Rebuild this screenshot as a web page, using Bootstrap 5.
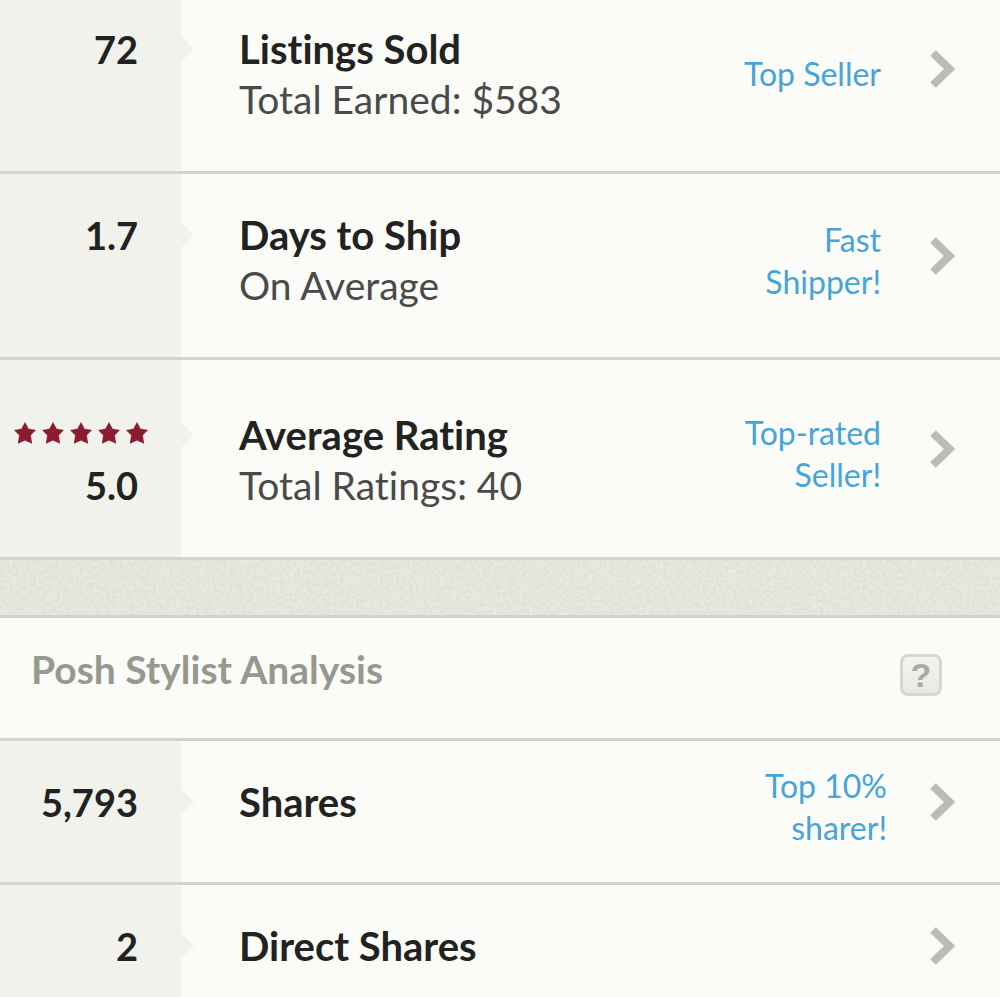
<!DOCTYPE html>
<html lang="en">
<head>
<meta charset="utf-8">
<meta name="viewport" content="width=device-width, initial-scale=1">
<title>Posh Stats</title>
<link href="https://cdn.jsdelivr.net/npm/bootstrap@5.3.0/dist/css/bootstrap.min.css" rel="stylesheet">
<script src="https://cdn.jsdelivr.net/npm/bootstrap@5.3.0/dist/js/bootstrap.bundle.min.js"></script>
<style>
  body { background: #fbfcf8; color: #222; font-family: Lato, "Liberation Sans", sans-serif; font-variant-ligatures: none; overflow-x: hidden; }
  .stat-row { display: grid; grid-template-columns: 181px 1fr auto auto; min-height: 144px; border-bottom: 3px solid #d2d3cc; color: #222; --top: 36px; --lift: 20px; }
  .stat-row.first { min-height: 174px; --top: 24px; --lift: 33px; }
  .stat-row.double { min-height: 186px; }
  .stat-row.rating { min-height: 200px; --top: 50px; }
  .stat-value { background: #f0f2eb; padding: var(--top) 33px 0 0; }
  .stat-value::after { content: ""; position: absolute; left: 100%; top: calc(var(--top) + 12px); border: solid transparent; border-width: 13px 0 13px 13px; border-left-color: #f0f2eb; }
  .num { display: block; padding-right: 10px; font-size: 38px; font-weight: 700; line-height: 50px; }
  .stars { gap: 6px; height: 50px; padding-bottom: 5px; }
  .stat-text { padding: var(--top) 0 0 58px; line-height: 50px; }
  .stat-name { font-size: 40px; font-weight: 700; line-height: 50px; }
  .stat-sub { font-size: 39px; color: #4a4a4a; }
  .stat-tag { color: #45a5d8; font-size: 32px; line-height: 42px; padding-bottom: calc(var(--lift) - 10px); margin-right: 49px; }
  .stat-tag.wide { margin-right: 43px; }
  .chev { box-sizing: content-box; margin-right: 44px; padding-bottom: var(--lift); }
  .band { height: 58px; background: #e2e3da; border-bottom: 3px solid #d2d3cc; }
  .section-head { min-height: 123px; border-bottom: 3px solid #d2d3cc; padding: 26px 58px 0 31px; }
  .section-head h2 { font-size: 39px; font-weight: 700; line-height: 50px; color: #97988e; }
  .help { width: 42px; height: 42px; margin-top: 10px; border: 3px solid #d6d7d2; border-radius: 8px; background: linear-gradient(#f3f3f0, #e8e8e4); color: #a8a9a5; font: 700 34px/36px "Liberation Sans", sans-serif; }
</style>
</head>
<body>
<svg class="d-none" aria-hidden="true">
  <symbol id="chevron" viewBox="0 0 26 38"><path d="M3 3 19.500 19 3 35" fill="none" stroke="#bbbcb8" stroke-width="8"/></symbol>
  <symbol id="star" viewBox="0 0 22 22"><path d="M11 0 14.600 6.800 22 8 16.800 13.300 18.200 21.800 11 18.400 3.800 21.800 5.200 13.300 0 8 7.400 6.800Z" fill="#8e1c30"/></symbol>
</svg>
<main>
  <a href="#sold" class="stat-row first text-decoration-none">
    <div class="stat-value position-relative text-end"><span class="num">72</span></div>
    <div class="stat-text"><h3 class="stat-name m-0">Listings Sold</h3><p class="stat-sub m-0">Total Earned: $583</p></div>
    <div class="stat-tag align-self-center text-end">Top Seller</div>
    <svg class="chev align-self-center" width="26" height="38" aria-hidden="true"><use href="#chevron"/></svg>
  </a>
  <a href="#ship" class="stat-row double text-decoration-none">
    <div class="stat-value position-relative text-end"><span class="num">1.7</span></div>
    <div class="stat-text"><h3 class="stat-name m-0">Days to Ship</h3><p class="stat-sub m-0">On Average</p></div>
    <div class="stat-tag align-self-center text-end">Fast<br>Shipper!</div>
    <svg class="chev align-self-center" width="26" height="38" aria-hidden="true"><use href="#chevron"/></svg>
  </a>
  <a href="#rating" class="stat-row rating text-decoration-none">
    <div class="stat-value position-relative text-end">
      <div class="stars d-flex justify-content-end align-items-center" role="img" aria-label="5 stars">
        <svg width="22" height="22"><use href="#star"/></svg><svg width="22" height="22"><use href="#star"/></svg><svg width="22" height="22"><use href="#star"/></svg><svg width="22" height="22"><use href="#star"/></svg><svg width="22" height="22"><use href="#star"/></svg>
      </div>
      <span class="num">5.0</span>
    </div>
    <div class="stat-text"><h3 class="stat-name m-0">Average Rating</h3><p class="stat-sub m-0">Total Ratings: 40</p></div>
    <div class="stat-tag align-self-center text-end">Top-rated<br>Seller!</div>
    <svg class="chev align-self-center" width="26" height="38" aria-hidden="true"><use href="#chevron"/></svg>
  </a>
  <div class="band">
    <svg class="d-block" width="100%" height="100%" aria-hidden="true">
      <filter id="grain" x="0" y="0" width="100%" height="100%" color-interpolation-filters="sRGB"><feTurbulence type="fractalNoise" baseFrequency="0.3" numOctaves="3" seed="4"/><feColorMatrix values=".08 0 0 0 .858  .08 0 0 0 .86  .08 0 0 0 .825  0 0 0 0 1"/></filter>
      <rect width="100%" height="100%" filter="url(#grain)"/>
    </svg>
  </div>
  <div class="section-head d-flex justify-content-between align-items-start">
    <h2 class="m-0">Posh Stylist Analysis</h2>
    <button type="button" class="help p-0" aria-label="Help">?</button>
  </div>
  <a href="#shares" class="stat-row text-decoration-none">
    <div class="stat-value position-relative text-end"><span class="num">5,793</span></div>
    <div class="stat-text"><h3 class="stat-name m-0">Shares</h3></div>
    <div class="stat-tag wide align-self-center text-end">Top 10%<br>sharer!</div>
    <svg class="chev align-self-center" width="26" height="38" aria-hidden="true"><use href="#chevron"/></svg>
  </a>
  <a href="#direct" class="stat-row text-decoration-none">
    <div class="stat-value position-relative text-end"><span class="num">2</span></div>
    <div class="stat-text"><h3 class="stat-name m-0">Direct Shares</h3></div>
    <div></div>
    <svg class="chev align-self-center" width="26" height="38" aria-hidden="true"><use href="#chevron"/></svg>
  </a>
</main>
</body>
</html>
